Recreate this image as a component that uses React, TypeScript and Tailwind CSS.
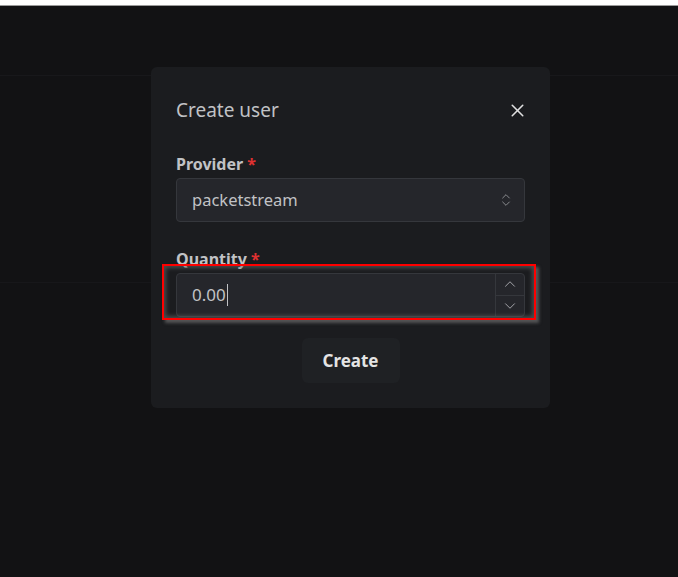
import { X, ChevronsUpDown, ChevronUp, ChevronDown } from 'lucide-react'

const font = { fontFamily: '"Noto Sans", "Open Sans", sans-serif' }

export default function App() {
  return (
    <div className="relative h-[577px] w-[678px] overflow-hidden bg-white" style={font}>
      {/* page behind the overlay */}
      <div className="mt-[5px] h-[572px] border-t border-[#9a9a9a] bg-[#121214]">
        <div className="h-[70px] border-b border-[#18181b]" />
        <div className="h-[207px] border-b border-[#17171a]" />
      </div>

      {/* modal */}
      <div className="absolute left-[151px] top-[67px] w-[399px] rounded-md bg-[#1b1c1f] px-[25px] pb-[25px] pt-[29px]">
        <div className="flex h-[28px] items-center justify-between">
          <h2 className="text-[19px] font-normal leading-[28px] text-[#c1c2c5]">Create user</h2>
          <button type="button" className="-mr-[6px] flex h-7 w-7 items-center justify-center text-[#e0e0e0]">
            <X size={21} strokeWidth={1.75} />
          </button>
        </div>

        <label className="mt-[29px] block text-[16px] font-bold leading-[22px] text-[#c1c2c5]">
          Provider <span className="text-[#e03131]">*</span>
        </label>
        <div className="mt-[3px] flex h-[44px] items-center justify-between rounded border border-[#35373c] bg-[#25262b] pl-[15px] pr-[10px]">
          <span className="text-[16.5px] text-[#c1c2c5]">packetstream</span>
          <ChevronsUpDown size={16} strokeWidth={1.4} className="text-[#909296]" />
        </div>

        <label className="mt-[26px] block text-[16px] font-bold leading-[22px] text-[#c1c2c5]">
          Quantity <span className="text-[#e03131]">*</span>
        </label>
        <div className="mt-[3px] flex h-[44px] items-stretch rounded border border-[#35373c] bg-[#25262b]">
          <div className="flex flex-1 items-center pl-[15px]">
            <span className="text-[17px] text-[#c1c2c5]">0.00</span>
            <span className="ml-[1px] h-[22px] w-px bg-[#c1c2c5]" />
          </div>
          <div className="flex w-[29px] flex-col border-l border-[#35373c]">
            <div className="flex flex-1 items-center justify-center border-b border-[#35373c] text-[#b0b1b5]">
              <ChevronUp size={18} strokeWidth={1.2} />
            </div>
            <div className="flex flex-1 items-center justify-center text-[#b0b1b5]">
              <ChevronDown size={18} strokeWidth={1.2} />
            </div>
          </div>
        </div>

        <div className="mt-[21px] flex justify-center">
          <button type="button" className="h-[45px] w-[98px] rounded-md bg-[#1f2124] text-[17px] font-bold text-[#e4e4e4]">
            Create
          </button>
        </div>
      </div>

      {/* annotation box */}
      <div className="absolute left-[162px] top-[264px] h-[56px] w-[374px] border-2 border-[#ff0000] shadow-[3px_3px_3px_rgba(110,110,110,0.7),inset_0_0_4px_2px_rgba(110,110,110,0.6)]" />
    </div>
  )
}
